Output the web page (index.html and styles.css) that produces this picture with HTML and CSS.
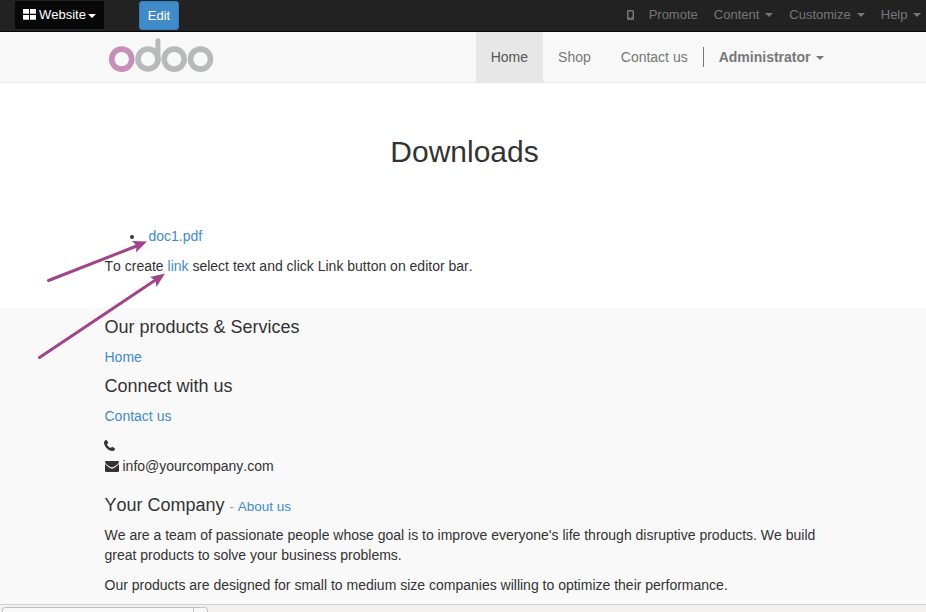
FILE: index.html
```html
<!DOCTYPE html>
<html lang="en">
<head>
<meta charset="utf-8">
<title>Downloads</title>
<link rel="stylesheet" href="styles.css">
</head>
<body>
<div class="toolbar">
  <a class="website"><svg class="grid-icon" width="13" height="11" viewBox="0 0 13 11"><path d="M.5 0H6v4.700H0V.5zM7 0h5.500l.5.500v4.200H7zM0 6h6v4.700H.5L0 10.200zM7 6h6v4.200l-.5.500H7z" fill="#fff"/></svg>Website<i class="caret"></i></a>
  <a class="edit">Edit</a>
  <div class="tools">
    <svg class="mobile" width="7" height="10" viewBox="0 0 7 10"><path fill="#777" fill-rule="evenodd" d="M1 0h5l1 1v8l-1 1H1L0 9V1zM1.500 1.500v6h4v-6zM3 8.200h1v1H3z"/></svg>
    <a>Promote</a><a>Content<i class="caret"></i></a><a>Customize<i class="caret"></i></a><a class="help">Help<i class="caret"></i></a>
  </div>
</div>
<header class="navbar">
  <svg class="logo" width="106" height="36" viewBox="0 0 106 36" fill="none" stroke-width="5.600">
    <circle cx="13.700" cy="21.100" r="10" stroke="#c58fb8"/>
    <g stroke="#b8b9b9"><circle cx="40" cy="21" r="10"/><path d="M49.900 21.500V2.800" stroke-width="5" stroke-linecap="round"/><circle cx="66.200" cy="21.100" r="10"/><circle cx="92.500" cy="21.100" r="10"/></g>
  </svg>
  <nav class="menu">
    <a class="active">Home</a><a>Shop</a><a>Contact us</a><span class="divider"></span><a class="user">Administrator<i class="caret"></i></a>
  </nav>
</header>
<main class="content">
  <h2>Downloads</h2>
  <ul><li><a>doc1.pdf</a></li></ul>
  <p>To create <a>link</a> select text and click Link button on editor bar.</p>
</main>
<footer class="footer">
  <h4>Our products &amp; Services</h4>
  <div class="line"><a>Home</a></div>
  <h4>Connect with us</h4>
  <div class="line"><a>Contact us</a></div>
  <div class="contact phone"><svg width="11" height="11" viewBox="0 0 11 11"><path fill="#333" d="M2.300 0C1 .3 0 1.200 0 2.700c0 1.700 1.200 4 2.700 5.500S6.500 11 8.300 11c1.500 0 2.400-1 2.700-2.300 0-.4-.2-.6-.5-.7L8.400 6.900c-.3-.1-.6 0-.8.3l-.8.9C5.200 7.600 3.400 5.800 2.900 4.200l.9-.8c.3-.2.4-.5.300-.8L3 .5C2.900.2 2.700 0 2.300 0z"/></svg></div>
  <div class="contact"><svg width="14" height="11" viewBox="0 0 14 11"><path fill="#333" d="M1.200 0h11.600Q14 0 14 1.200C14 2.500 9 6.300 7 6.300S0 2.500 0 1.200Q0 0 1.200 0zM0 3c2 2 5 4.700 7 4.700S12 5 14 3v6.800q0 1.200-1.200 1.200H1.200Q0 11 0 9.800z"/></svg><span>info@yourcompany.com</span></div>
  <h4 class="company">Your Company <small>- <a>About us</a></small></h4>
  <p>We are a team of passionate people whose goal is to improve everyone's life through disruptive products. We build great products to solve your business problems.</p>
  <p>Our products are designed for small to medium size companies willing to optimize their performance.</p>
</footer>
<div class="shelf"><div class="item"><span></span></div></div>
<svg class="arrows" width="140" height="130" viewBox="30 235 140 130">
  <g stroke="#a0458a" stroke-width="3" stroke-linecap="round"><path d="M48.500 280.500L138 245.500M39.500 357.500L157 279"/></g>
  <path fill="#a0458a" d="M147 241.500L132 241l4.500 4.500-.5 7zM165 273.500l-15 3.500 5.500 3.500 1 6.500z"/>
</svg>
</body>
</html>
```
FILE: styles.css
```css
* { box-sizing: border-box; }
body {
  margin: 0;
  height: 612px;
  display: flex;
  flex-direction: column;
  overflow: hidden;
  position: relative;
  font: 14px/20px "Liberation Sans", Arial, sans-serif;
  font-kerning: none;
  color: #333;
  background: #fff;
}
a { color: #428bca; }
h2, h4, p, ul { margin: 0; }
h2, h4 { font-weight: 400; }
.caret {
  display: inline-block;
  border: 4px solid transparent;
  border-top-color: currentColor;
  border-bottom: 0;
  vertical-align: middle;
  margin-left: 6px;
}
.toolbar {
  display: flex;
  flex: none;
  height: 32px;
  background: #222;
  border-bottom: 1px solid #080808;
  font-size: 13px;
}
.website {
  display: flex;
  align-items: center;
  width: 89px;
  height: 28px;
  margin: 1px 0 0 15px;
  padding: 0 0 0 8px;
  background: #080808;
  color: #fff;
}
.grid-icon { margin: -2px 3px 0 0; }
.website .caret { margin: 2px 0 0 2px; }
.edit {
  width: 40px;
  height: 29px;
  margin: 1px 0 0 35px;
  border: 1px solid #357ebd;
  border-radius: 3px;
  background: #428bca;
  color: #fff;
  line-height: 27px;
  text-align: center;
}
.tools {
  display: flex;
  align-items: center;
  gap: 16px;
  height: 29px;
  margin-left: auto;
  padding-right: 5px;
}
.tools a { color: #777; }
.mobile { margin-right: -1px; }
.help .caret { margin-left: 5.5px; }
.user .caret { margin-left: 5.5px; }
.navbar {
  display: flex;
  flex: none;
  justify-content: space-between;
  height: 51px;
  padding: 0 87px 0 108px;
  background: #f8f8f8;
  border-bottom: 1px solid #e7e7e7;
}
.logo { margin-top: 6px; }
.menu { display: flex; }
.menu a { padding: 15px; color: #777; }
.menu .active { background: #e7e7e7; color: #555; }
.divider { width: 1px; height: 20px; margin-top: 15px; background: #777; }
.menu .user { font-weight: 700; }
.content {
  flex: none;
  height: 225px;
  padding: 52px 104.5px 0;
}
h2 { font-size: 30px; line-height: 33px; text-align: center; }
.content h2 { margin-bottom: 58px; margin-right: -3px; }
ul { padding-left: 40px; margin-bottom: 10px; }
li a { margin-left: 4px; }
.footer {
  flex: none;
  height: 296px;
  padding: 10px 104.5px 0;
  background: #f9f9f9;
}
h4 { font-size: 18px; line-height: 19px; margin-bottom: 10px; }
.line { margin-bottom: 10px; }
.contact { display: flex; align-items: center; height: 20px; gap: 4px; }
.phone { padding-bottom: 2px; }
.phone svg { margin-left: -0.5px; }
.company { margin-top: 20px; margin-bottom: 9px; }
small { font-size: 13.5px; color: #999; }
.footer p { margin-bottom: 10px; }
.shelf {
  flex: 1;
  border-top: 1px solid #d0d0d0;
  background: #f2f1f0;
  padding: 2px 0 0 2px;
}
.item {
  width: 206px;
  height: 24px;
  border: 1px solid #c2c2c2;
  border-radius: 3px;
  background: #f8f8f8;
}
.item span { display: block; width: 191px; height: 20px; border-right: 1px solid #c2c2c2; }
.arrows { position: absolute; left: 30px; top: 235px; }
```
